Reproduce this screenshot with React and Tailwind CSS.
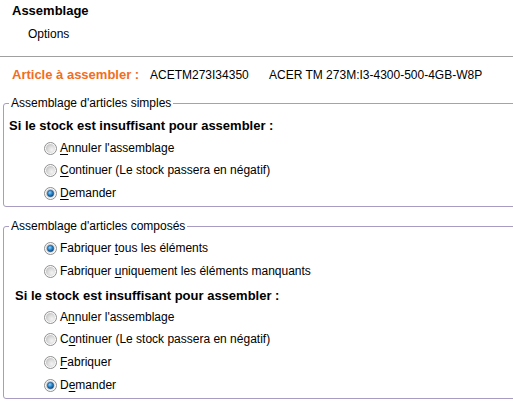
import React from "react";

function Radio({ checked }) {
  const id = checked ? "on" : "off";
  return (
    <svg width="13" height="13" viewBox="0 0 13 13" className="shrink-0">
      <defs>
        <radialGradient id={`rg-${id}`} cx="0.65" cy="0.65" r="0.7">
          <stop offset="0" stopColor="#f4f4f4" />
          <stop offset="0.6" stopColor="#dcdcdc" />
          <stop offset="1" stopColor="#c4c4c4" />
        </radialGradient>
        <radialGradient id="dot" cx="0.4" cy="0.35" r="0.7">
          <stop offset="0" stopColor="#8fd3ff" />
          <stop offset="0.5" stopColor="#2a86cc" />
          <stop offset="1" stopColor="#0c3f73" />
        </radialGradient>
      </defs>
      <circle cx="6.5" cy="6.5" r="6" fill="#fafafa" stroke="#8f8f8f" strokeWidth="1" />
      <circle cx="6.5" cy="6.5" r="4.5" fill={`url(#rg-${id})`} />
      {checked && <circle cx="6.5" cy="6.5" r="3.2" fill="url(#dot)" stroke="#1a4f80" strokeWidth="0.6" />}
    </svg>
  );
}

function U({ children }) {
  return <span className="underline underline-offset-[2px] decoration-1">{children}</span>;
}

function Row({ checked, mt, children }) {
  return (
    <div className={`flex items-center h-[14px] gap-[3px] pl-[40px] ${mt}`}>
      <Radio checked={checked} />
      <span className="leading-[14px]">{children}</span>
    </div>
  );
}

export default function App() {
  return (
    <div
      className="w-[513px] h-[406px] overflow-hidden bg-white text-black text-[12px]"
      style={{ fontFamily: '"Liberation Sans", Arial, sans-serif' }}
    >
      <div className="pt-[4px]">
        <div className="pl-[12px] h-[14px] leading-[14px] font-bold text-[13px]">Assemblage</div>
        <div className="pl-[28px] mt-[9px] h-[14px] leading-[14px]">Options</div>
      </div>
      <div className="mt-[15px] h-px bg-[#a0a0a0]" />
      <div className="mt-[11px] flex h-[14px] leading-[14px] pl-[12px]">
        <span className="w-[138px] font-bold text-[13px] text-[#f26d21]">Article à assembler :</span>
        <span className="w-[119px]">ACETM273I34350</span>
        <span>ACER TM 273M:I3-4300-500-4GB-W8P</span>
      </div>

      <fieldset className="mt-[14px] ml-[3px] w-[540px] border border-[#a79cc1] rounded-[3px] pb-[6px]">
        <legend className="ml-[5px] px-[2px] h-[14px] leading-[14px]">Assemblage d'articles simples</legend>
        <div className="mt-[9px] pl-[5px] font-bold text-[13px] h-[14px] leading-[14px]">Si le stock est insuffisant pour assembler :</div>
        <Row mt="mt-[8px]"><U>A</U>nnuler l'assemblage</Row>
        <Row mt="mt-[8px]"><U>C</U>ontinuer (Le stock passera en négatif)</Row>
        <Row mt="mt-[9px]" checked><U>D</U>emander</Row>
      </fieldset>

      <fieldset className="mt-[12px] ml-[3px] w-[540px] border border-[#a79cc1] rounded-[3px] pb-[6px]">
        <legend className="ml-[5px] px-[2px] h-[14px] leading-[14px]">Assemblage d'articles composés</legend>
        <Row mt="mt-[8px]" checked>Fabriquer <U>t</U>ous les éléments</Row>
        <Row mt="mt-[9px]">Fabriquer <U>u</U>niquement les éléments manquants</Row>
        <div className="mt-[11px] pl-[11px] font-bold text-[13px] h-[14px] leading-[14px]">Si le stock est insuffisant pour assembler :</div>
        <Row mt="mt-[7px]">A<U>n</U>nuler l'assemblage</Row>
        <Row mt="mt-[8px]">C<U>o</U>ntinuer (Le stock passera en négatif)</Row>
        <Row mt="mt-[9px]"><U>F</U>abriquer</Row>
        <Row mt="mt-[9px]" checked>D<U>e</U>mander</Row>
      </fieldset>
    </div>
  );
}
